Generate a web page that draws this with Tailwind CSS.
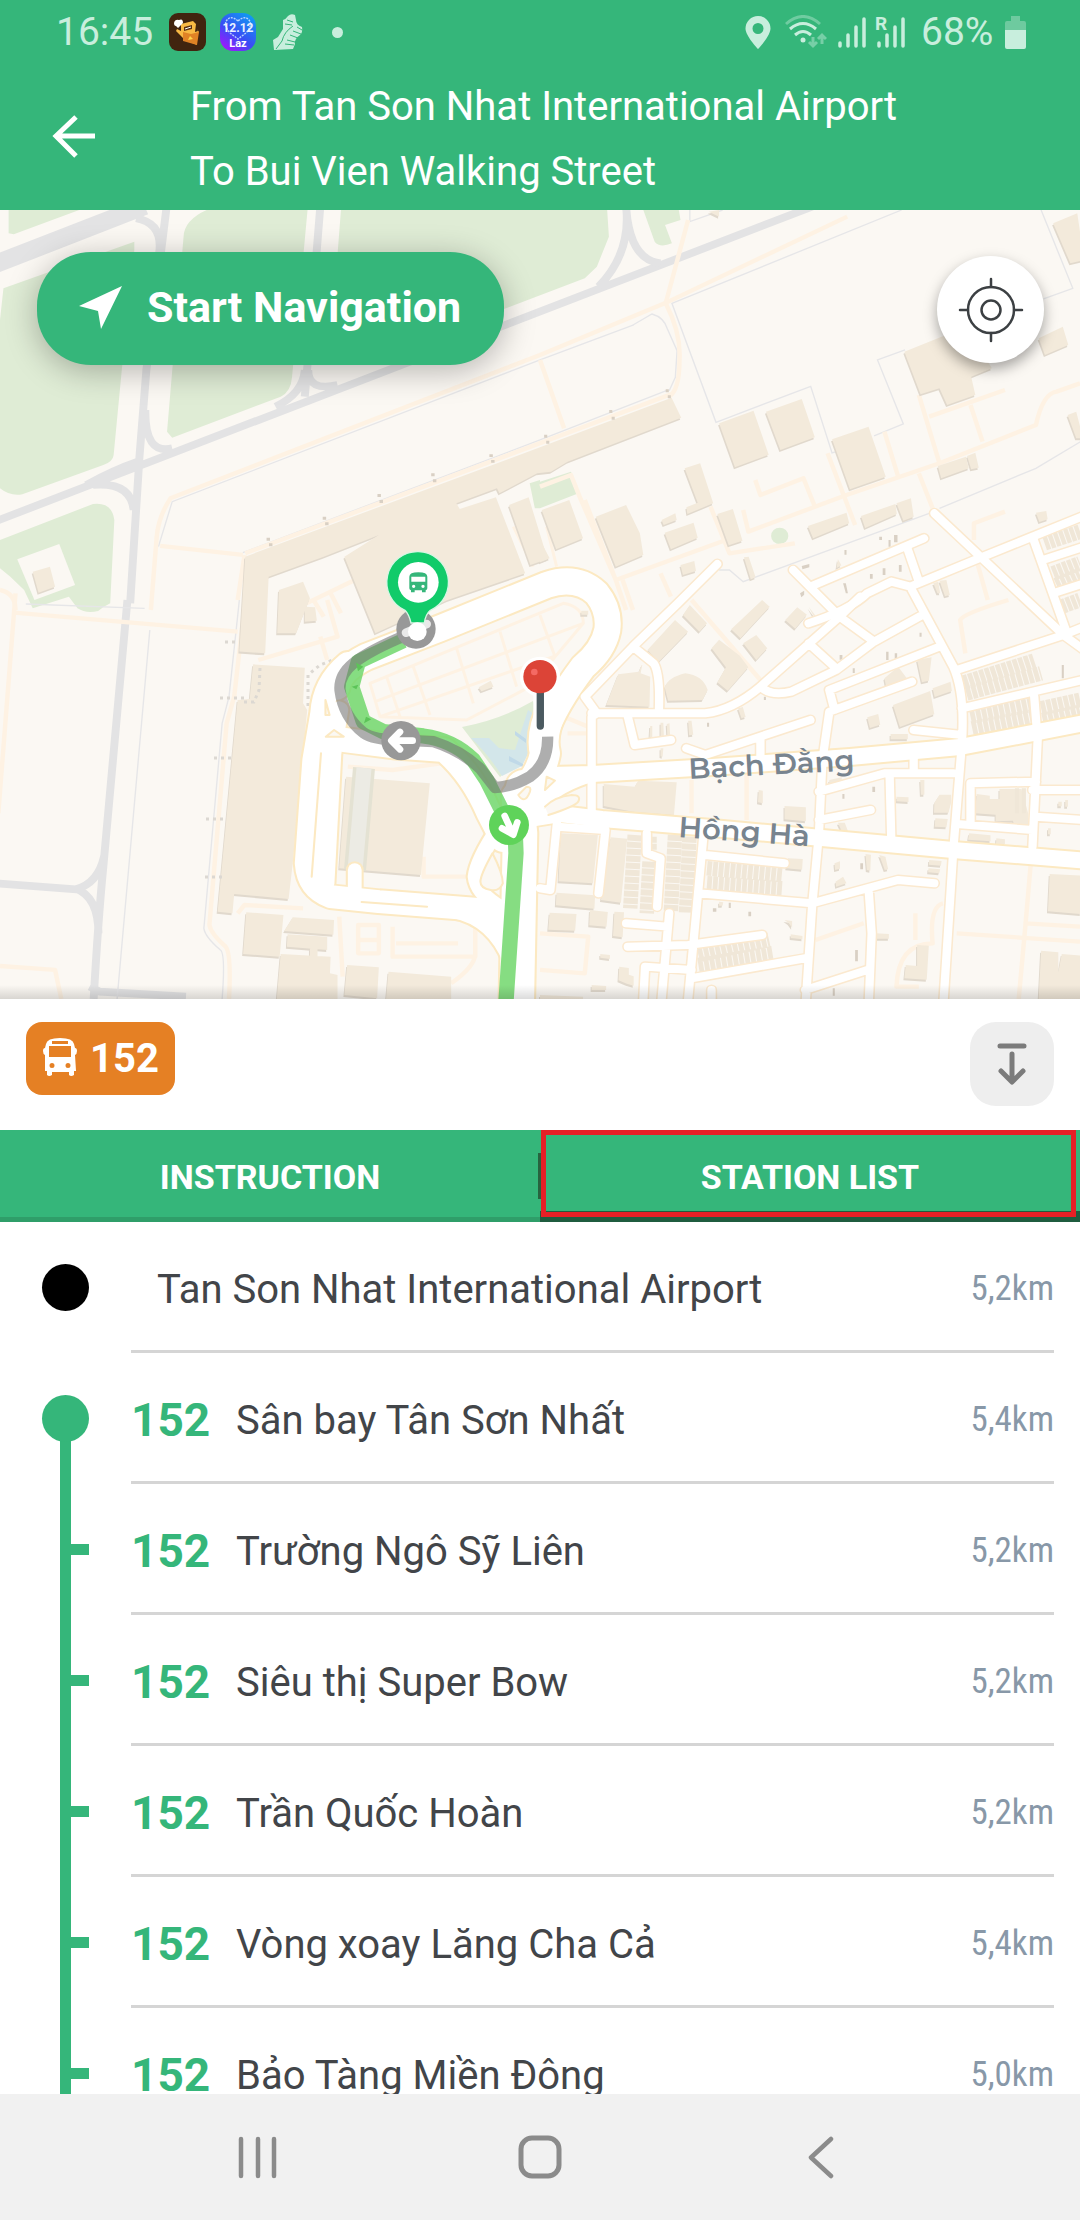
<!DOCTYPE html>
<html lang="vi">
<head>
<meta charset="utf-8">
<meta name="viewport" content="width=device-width, initial-scale=1">
<title>Route 152 – Station list</title>
<script src="https://cdn.jsdelivr.net/npm/@tailwindcss/browser@4"></script>
</head>
<body class="flex h-screen flex-col overflow-hidden bg-white font-[Roboto,sans-serif] text-[40px] text-[#424549]">

<header class="shrink-0 bg-[#35b67a] pb-[6px] text-white">
  <!-- status bar -->
  <div class="flex h-[74px] items-start justify-between pr-[54px] pl-[56px] pt-[8px] text-[#c8eedd]">
    <div class="flex h-[48px] items-center">
      <span class="w-[113px] text-[39px] leading-[48px]">16:45</span>
      <svg class="h-[38px] w-[37px]" viewBox="0 0 37 38" aria-hidden="true">
        <rect width="37" height="38" rx="9" fill="#41240f"/>
        <path d="M12 11l12-3 3 3-1 8 3-1-1-2 2 3-3 5 1 8-12-5-5-5-4-4 1-2 4 2z" fill="#f8b944"/>
        <path d="M14 19l8 2 8-2-2 13-14-4z" fill="#e08225"/>
        <path d="M5 10q1-4 5-3 4-2 4 3l-5 5-2-2q-2 0-2-3z" fill="#fff"/>
        <path d="M15 14l8-2v4l-8 2z" fill="#5b3110"/><path d="M16 16l6-2" stroke="#fff" stroke-width="1"/>
        <path d="M21 23l3 3-5 1z" fill="#ffd54a"/>
      </svg>
      <svg class="ml-[14px] h-[38px] w-[36px]" viewBox="0 0 36 38" aria-hidden="true">
        <defs><linearGradient id="lz" x1="0" y1="1" x2=".7" y2="0"><stop offset="0" stop-color="#b80bff"/><stop offset=".5" stop-color="#3a4cf5"/><stop offset="1" stop-color="#1296f2"/></linearGradient></defs>
        <rect width="36" height="38" rx="13" fill="url(#lz)"/>
        <path d="M18 8Q11 2 7 7t3 13l8 6 8-6q7-8 3-13T18 8z" fill="none" stroke="#b9d4ff" stroke-width="1.4" stroke-dasharray="2 1"/>
        <text x="18" y="19" text-anchor="middle" font-size="12" font-weight="700" fill="#e9f2ff">12.12</text>
        <text x="18" y="34" text-anchor="middle" font-size="11" font-weight="700" fill="#fff">Laz</text>
      </svg>
      <svg class="ml-[17px] h-[38px] w-[31px]" viewBox="0 0 31 38" fill="#c8eedd" aria-hidden="true">
        <path d="M10 7q3-1 5-4 3-3 7-1l1 5q0 5 6 7 1 5-2 8-6 4-5 9l-2 5-19 1-1-10 5-3 5-8z"/>
        <path d="M20 13q-9 6-11 15l-6 8M24 14l5 3M20 18l8 3M17 22l8 3M14 27l8 2M12 31l9 1M14 7l6 2M12 11l7 1" fill="none" stroke="#35b67a" stroke-width="1"/>
      </svg>
      <span class="ml-[28px] size-[11px] rounded-full bg-[#c8eedd]"></span>
    </div>
    <div class="flex h-[48px] items-center">
      <svg class="h-[33px] w-[26px]" viewBox="0 0 26 33" fill="#c8eedd" aria-hidden="true"><path fill-rule="evenodd" d="M13 0a12.5 12.5 0 0 1 12.5 12.5C25.500 20 13 33 13 33S.5 20 .5 12.500A12.500 12.500 0 0 1 13 0zm0 7a5.500 5.500 0 1 0 0 11 5.500 5.500 0 0 0 0-11z"/></svg>
      <svg class="ml-[14px] h-[34px] w-[42px]" viewBox="0 0 42 34" fill="none" stroke="#c8eedd" stroke-width="3" aria-hidden="true">
        <path d="M1 9Q18-6 35 9" opacity=".4"/><path d="M5 14q13-11 26 0M10 20q8-7 16 0"/><circle cx="18" cy="25" r="2.500" fill="#c8eedd" stroke="none"/>
        <path d="M28 22v9m-4-4l4 4 4-4M37 29v-9m-4 4l4-4 4 4" opacity=".45"/>
      </svg>
      <svg class="ml-[11px] h-[34px] w-[28px]" viewBox="0 0 28 34" stroke="#c8eedd" stroke-width="3.500" stroke-linecap="round" aria-hidden="true"><path d="M2 28v3M10 20v11M18 12v19M26 4v27"/></svg>
      <svg class="ml-[9px] h-[34px] w-[30px] overflow-visible" viewBox="0 0 30 34" stroke="#c8eedd" stroke-width="3.500" stroke-linecap="round" aria-hidden="true"><path d="M4 28v3M12 20v11M20 12v19M28 4v27"/><text x="0" y="15" font-size="19" font-weight="700" fill="#c8eedd" stroke="none">R</text></svg>
      <span class="ml-[16px] w-[84px] text-[39px] leading-[48px]">68%</span>
      <svg class="h-[33px] w-[21px]" viewBox="0 0 21 33" aria-hidden="true"><path d="M6 0h9v5h4q2 0 2 2v8H0V7q0-2 2-2h4z" fill="#6eca9f"/><path d="M0 14h21v17q0 2-2 2H2q-2 0-2-2z" fill="#c8eedd"/></svg>
    </div>
  </div>
  <div class="flex items-center pl-[50px]">
    <button type="button" aria-label="Back" class="w-[140px] shrink-0">
      <svg class="size-[48px]" viewBox="0 0 48 48" fill="none" stroke="#fff" stroke-width="5"><path d="M45 21H6M26 2L6 21l20 20"/></svg>
    </button>
    <h1 class="text-[40px] leading-[65px]">From Tan Son Nhat International Airport<br>To Bui Vien Walking Street</h1>
  </div>
</header>

<section class="relative h-[789px] shrink-0 overflow-hidden bg-[#fbf8f3]" aria-label="Map">
  <svg class="absolute inset-0 h-full w-full" viewBox="0 210 1080 789" preserveAspectRatio="xMidYMid slice">
    <defs>
      <g id="buildings">
        <g transform="translate(0 210) scale(.3444 .3333)">
          <path d="M712 1040L1568 712 1950 563 1978 623 1648 755 1600 785 1560 790 1450 850 1443 835 1325 880 1335 897 1440 862 1525 1090 1300 1170 1090 1270 1000 1040 1100 975 940 1040 780 1100 770 1330 695 1325zM1478 885l57-23 55 185-50 18zM810 1140l70-25 20 50-40 105h-55zM95 1085l50-15 15 60-48 18z"/>
        </g>
        <g transform="translate(540 210) scale(.3444 .3333)">
          <path d="M520 640l100-38 44 132-98 38zM656 605l104-38 38 115-100 38zM848 688l106-38 50 150-104 38zM1058 425l180-75 74 125-60 25 12 55-82 30-22-50-55 18zM1448 385l70-35 16 55-68 30zM420 775l45-15 38 120-75 32-3-20 33-14zM515 912l45-15 28 95-40 14zM362 968l84-30 12 45-78 35zM353 930l40-20 4 20-38 15zM162 920l88-35 40 85 10 65-80 35zM5 900l80-30 40 115-78 33zM0 990l28 55-28 12zM778 948l112-40 8 32-105 45zM932 918l100-36 4 30-92 42zM1035 880l42-15 8 55-30 12zM1155 768l82-28 8 35-80 30zM1240 738l24-10 10 45-22 5zM1490 40l70-30 20 140-40 10zM1532 615l25-10 20 80-20 0zM1440 908l30-5 4 25-24 8zM408 1065l40-12 5 30-38 12zM592 1042l14-2 20 62-14 6zM865 1048l10 18-14 8zM1142 1120l12 30h8l-6-35zM1160 1112l20-2 10 45-14 4zM490 5l30-5v20z"/>
        </g>
        <g transform="translate(0 600) scale(.3444 .3333)">
          <path d="M735 193L885 203 880 310 892 330 850 790 838 897 680 882 675 940 632 935 690 300 725 297zM715 937l108 8-11 125-106-8zM850 952l120 8-2 44-143-11zM835 1003l115 7v40l-117-10zM815 1062l145 8-2 50 22 5v80H803zM1008 1095l92 7-5 93-95-10zM1128 1115l182 15v80h-190zM1005 530l243 20-26 275-237-20zM885 20l30 2 5 40-35 3zM1390 262l35-20 8 18-35 14zM900 1040h22v30h-22z"/>
        </g>
        <g transform="translate(540 600) scale(.3444 .3333)">
          <path d="M192 315l35-92 60-8 8-20 2 0-5 25 28 10-2 90zM362 262q10-30 60-42 50 5 65 50l-15 30-100 2zM312 150l80-90 38 35-85 90zM415 45l20-30 50 55-22 25zM498 145l22-26 60 48 25 35-60 70-30-25 25-45zM555 88L645 0l22 20-85 95zM590 130l38-25 32 40-32 35zM712 60l35-38 28 22-34 42zM1025 315l108-42 12 70-100 38zM950 352l32-10 6 32-30 10zM1000 235l40-35 25 35-60 25zM1095 180l42-8-8 70-20 5zM1140 265l52-20 4 28-50 18zM1018 402h50v16h-50zM185 552l90 8 10-18 112 5-8 98-120-10-84-17zM60 700l108 5-14 145-100-6zM205 712l48 4-18 192-58-8zM48 878l112 8-2 40-112-10zM28 938l78 4-4 50-78-3zM145 930l52 6-4 44-50-4zM216 935l28 2-4 75-28-4zM710 618l62 4v42l-62-6zM1268 582l38 5 0 10 28 0v-30l64 0 20 75v35l-40 0-5-15-50 2v-20l-60-4zM1145 608l15-24h34v22l-8 32h-42zM1148 655l36 2-4 25-34-2zM1480 822l90 5v115l-95-8zM1455 1052l50 5v60l10-55 60 5v130h-127zM1095 1035l34 2-6 102-65-4 4-40 33 3zM1246 700l62 6v18l-65-5zM1325 715l25 3v14h-26zM720 775l43 2-2 32-46-4zM1130 780l36 3-2 14-35-3zM1128 805l34 3-3 12-32-3zM855 790l16-6v22l-14 4zM945 762l16 2-2 48-10-2zM985 765l18 5 8 38-10 2zM858 845l22-15 10 20-30 10zM230 1100l28 4v20l14 5v28l-20-6-24-10zM175 1062l28 3v12l-28-4zM150 1155l42 3v12h-42zM728 1003l34 5v10l-34-4zM975 1000l38 2v14h-38zM865 668l20 0 20 55-15 2zM635 570l12 2v38l-14-3zM575 325l14-4 8 30-12 4zM430 362l10 0 5 42-12 2zM320 378l6 0 0 34-8 0zM350 368h8l2 45-10 2zM368 372l8-2 2 40-8 0zM350 445h8l-2 25-6-2zM1035 590l35 2v14l-35-2zM840 540l36-8v14l-36 8zM1104 540h12v44h-10zM0 1185l125 5v20H0zM710 960l22 3v20l-10-14zM520 905l12 2-2 10h-10zM1505 605h10v14h-10zM1525 600h8v20h-8zM1475 685h8v18h-8zM120 32h20v12h-20zM780 20l28 38-6 4z"/>
        </g>
      </g>
      <g id="minor-roads">
        <g transform="translate(540 210) scale(.3444 .3333)">
          <path d="M785 1130l330-145M1065 1010l35 105M780 1240q120-40 170-90l70-35 55 15 200-85 310-130M1145 910l375 365 80 60M1430 980l100 290M1460 1050l120-40M1490 1150l90-30"/>
        </g>
        <g transform="translate(540 600) scale(.3444 .3333)">
          <path d="M150 660V350l15-10-35-50L270 140 400 10 515-108M150 340h330q80-10 160-80L870 50l60-60M870 50L735-90M270 140l60 50q20 30 15 150M640 260q30 30 90 15l130-65 110-85 140-80M780 130l80 75M870 50l100 75M1080-30l120 230q35 80 25 230M1210 210l310-105 60-25M1225 325l350-85M1435 290l10 130-15 320M1160 140L840 270l15 60M1080 245L840 335l-20 145-10 220-20 220-18 280M785 360L480 465 425 445M640 410v70M255 350l20 85 105-15M1225 430l-25 320-28 450M1085 390l140 15M1085 470v50M810 575l190-55h200M1015 520l5 200M810 660l150-30M1440 545l-190 5v120M1210 672l220 18M1430 570h150M1440 650l140 10M50 680l140 10-20 190M50 660L30 870 0 865M310 700v60l40 15-10 145M475 700l-45 500M480 765l230 25M460 880l330 30 250-70 105 10M955 880l8 120-8 200M250 970l120 10M375 940l-22 260M255 1040l175-5 215-30M440 1135l330-60M300 1200l5-100 135 10M770 1170l180-60M498 1170v40"/>
        </g>
      </g>
      <g id="avenues">
        <path d="M550 775L592 774 712 767 850 757 960 747 1090 722"/>
        <path d="M535 818L560 814 602 819 712 828 822 838 953 850 1090 861"/>
        <path d="M535 806Q560 782 592 774"/>
      </g>
      <linearGradient id="edge" x1="0" y1="0" x2="0" y2="1"><stop offset="0" stop-color="#000" stop-opacity="0"/><stop offset="1" stop-color="#000" stop-opacity=".14"/></linearGradient>
    </defs>

    <!-- parks and grass -->
    <g fill="#dfecd5">
      <g transform="translate(0 210) scale(.3444 .3333)">
        <path d="M25 0H230L40 73 25 70zM600 0H893L848 500Q845 545 815 560L500 683 485 665 533 80Q535 30 600 0zM990 0H1763L1768 80 1733 170 1698 205 1200 400H960zM390 95L10 235 0 330V835Q30 860 65 853L300 765Q328 755 330 735L355 465 390 120zM0 990L270 882Q325 875 332 930L320 1180Q300 1190 285 1203 250 1212 225 1195L200 1160 95 1195 70 1140 30 1100 0 1075z"/>
        <path d="M50 1048l122-46 46 123-118 45z" fill="#fbf8f3"/>
      </g>
      <g transform="translate(540 210) scale(.3444 .3333)">
        <path d="M300 0h103l5 30-45 15 20 55q-35 15-50-5zM0 815l90-30 22 65-112 45zM0 810l-30 10 15 75 15 0z"/><circle cx="696" cy="978" r="25"/>
      </g>
      <path d="M462 727Q500 720 533 701L540 720 530 750 500 777z"/>
    </g>
    <path d="M471 738l18 0 10 10 16 2 13-40 6 4-4 36-8 16-20 10q-14-22-31-38z" fill="#d3e6ea"/>
    <path d="M515 731l11 8v4l-11-8zM509 756l14 8v3l-14-6z" fill="#c0d9e8"/>

    <!-- taxiways -->
    <g fill="none" stroke="#e3e3e4" stroke-width="23">
      <g transform="translate(0 210) scale(.3444 .3333)">
        <path d="M-20 165L420-12" stroke-width="54"/>
        <path d="M485-20L425 480 405 740 378 1180M930-10L890 500 885 560M-10 933L2358-10M400 755Q330 780 250 825M270 825Q380 815 388 900M422 600Q420 735 500 715M395 25Q475 40 462 130M885 480Q880 550 800 590M895 480Q895 545 980 525"/>
      </g>
      <g transform="translate(540 210) scale(.3444 .3333)"><path d="M250-10Q265 130 170 230M250-10Q260 150 350 160"/></g>
      <g transform="translate(0 600) scale(.3444 .3333)"><path d="M370 0L300 800Q285 960 272 1197M-10 850L220 868Q285 850 302 770M220 866Q285 890 286 1000M260 1160L290 1175 540 1190"/></g>
    </g>

    <!-- fences and thin tracks -->
    <g fill="none" stroke="#e6e6e8" stroke-width="4">
      <g transform="translate(0 210) scale(.3444 .3333)"><path d="M460 1010L500 875 1568 450 1840 345M705 1028L1568 690 1935 542"/></g>
      <g transform="translate(540 210) scale(.3444 .3333)"><path d="M270 345l55-33q35 10 45 45l28 65-5 80-18 40M1050 0L383 280l128 357 275-108 62 200 25-8M1060 420l-80 30 75 192-85 36M1455 0l92 235-85 32M1160 895l280-120 130-80M1130 910L590 1115l-40-35h-30M435 0v35L530 0"/></g>
      <g transform="translate(0 600) scale(.3444 .3333)"><path d="M435 90L340 1197M695 0L665 290 645 370 592 985Q595 1010 640 1050 655 1060 645 1197M75 12L420 25"/></g>
    </g>
    <g fill="none" stroke="#fef2e3" stroke-width="13" stroke-linejoin="round">
      <g transform="translate(0 210) scale(.3444 .3333)"><path d="M438 1200L455 980Q460 920 495 865L1568 435 1930 280 2460 20M465 1008L705 1035M0 1140Q45 1150 45 1200M712 1030L1950 552M710 1035L690 1170" /><path d="M870 1190L1030 1110Q1080 1100 1085 1150L1110 1220M910 1170l30 50M960 1150l30 60"/></g>
      <g transform="translate(540 210) scale(.3444 .3333)"><path d="M430 30L365 280Q410 370 405 450 405 540 375 560M0 450L70 655M0 830L90 795 115 860 220 1110 540 990M1100 555L1160 760 890 855 605 965 590 900M835 730L915 945M1000 665L1040 800M1130 620L1350 540M1250 585L1285 695M1160 760L1440 645Q1460 550 1500 545L1568 520M1100 790L1140 895M625 810L640 855 765 805 800 895M495 890L550 1030 740 1000M220 1110L250 1200M350 1090L380 1160M1260 990V940L1350 905M1270 1060L1300 1170M240 1110L270 1200M130 870L220 1110"/></g>
      <g transform="translate(0 600) scale(.3444 .3333)"><path d="M45-20L-5 640M40 38L690 95M0 1098L160 1110 178 1197M712 0L680 290 658 370 608 975Q612 1000 655 1040 672 1060 665 1197M690 940L710 915 880 925M985 950L995 1130M1040 975H1100V1060H1040zM1040 1020h60M1140 980V1070H1380V985M1150 1030H1330M1010 500L1140 510 1280 490M1230 770V830H1370M750 180L980 110 950 0M930 110L950 180M1310 1150Q1380 1100 1380 1060"/></g>
      <g transform="translate(540 600) scale(.3444 .3333)"><path d="M440 540V640M600 520V660M440 0L640 240M1425 790L1410 970 1390 1197M1210 1000L1568 1025M1410 970L1568 980M1170 910Q1130 920 1140 1030 1040 1030 1035 1160H1100M1090 940V1020M800 1020L940 970M0 1000L140 1010 130 1120 0 1110M1235 160L1220 60Q1230 40 1360 0M70 350L140 380M80 400H140"/></g>
      <g transform="translate(300 520) scale(.3333)" stroke-width="9"><path d="M210 490L790 250Q850 260 850 310L690 500 500 600 240 590zM225 545L850 310M240 590L760 410M260 470L300 590M340 440L390 585M470 385L520 550M600 335L650 500M720 285L765 410M640 20L700 140M740 20L770 140"/></g>
    </g>

    <use href="#buildings" x="-1" y="2" fill="#e1d9cd"/>
    <use href="#buildings" fill="#f3eadb"/>
    <path d="M355 870L364 768" stroke="#e4e2d3" stroke-width="22" fill="none"/>
    <path d="M355 870L364 768" stroke="#ecebe4" stroke-width="15" fill="none"/>

    <!-- terraced houses -->
    <g fill="none" stroke="#f0e7d8">
      <g transform="translate(540 600) scale(.3444 .3333)">
        <g stroke-width="44" stroke-dasharray="14 3"><path d="M1230 248L1435 182M1238 280L1455 220M1455 325L1568 300M1460 360L1568 335M1250 350L1425 315M1255 385L1425 350M485 805L705 825M485 850L705 865M460 1065L665 1020M460 1095L675 1060"/></g>
        <g stroke-width="42" stroke-dasharray="18 3"><path d="M275 705L262 925M318 710V760M318 785L310 940M392 705L380 935M434 710L424 938"/></g>
        <path d="M1385 565V640M1405 565V640" stroke-width="12"/>
      </g>
      <g transform="translate(540 210) scale(.3444 .3333)" stroke-width="44" stroke-dasharray="13 3"><path d="M1465 1000L1568 965M1490 1090L1568 1060M1500 1125L1568 1095M1515 1190L1568 1170"/></g>
    </g>
    <g fill="#d9d0c4"><g transform="translate(540 600) scale(.3444 .3333)"><path d="M485 368h6v12h-6zM650 290h6v10h-6zM908 205h6v14h-6zM1005 155h7v25h-7zM1030 160h7v18h-7zM870 165h8v14h-8zM1102 98h6v12h-6zM605 935l8 0v14h-8zM502 925h10v10h-10zM548 908h6v16h-6zM915 1050h8v34h-8zM850 1165h6v22h-6zM930 790h8v18h-8zM965 560h8v16h-8zM878 582h6v14h-6zM1515 195h6v40h-6z"/></g>
    <g transform="translate(540 210) scale(.3444 .3333)"><path d="M985 980h8v10h-8zM1012 990h6v20h-6zM1028 975h10v22h-10zM995 1075h8v20h-8zM1042 1065h8v20h-8zM958 1092h8v14h-8zM884 1020h6v14h-6zM880 1120l8 0 6 30h-6zM755 1150l12-8v12l-8 8zM760 1068l22-6v10l-20 6z"/><path d="M365 538h9v9h-9zM371 556h9v9h-9zM201 600h9v9h-9zM208 620h9v9h-9zM12 674h9v9h-9zM18 692h9v9h-9z"/></g>
    <g transform="translate(0 210) scale(.3444 .3333)"><path d="M1421 733h10v8h-10zM1426 750h10v8h-10zM1252 790h10v9h-10zM1257 808h10v9h-10zM1096 852h10v9h-10zM1102 870h10v9h-10zM937 920h10v9h-10zM944 937h10v9h-10zM774 983h10v9h-10zM781 1000h10v9h-10z"/></g></g>
    <g fill="none" stroke="#dcd8d2" stroke-width="3" stroke-dasharray="3 4"><path d="M225 642h14M220 698h26M214 758h18M206 819h20M205 877h17M260 668l-1 22-5 12h-14M308 706V675l12-10 18-7"/></g>

    <!-- streets: casing, then surface -->
    <g fill="none" stroke-linecap="round" stroke-linejoin="round">
      <use href="#minor-roads" stroke="#fbe9cf" stroke-width="33"/>
      <g stroke="#fce9c2">
        <use href="#avenues" stroke-width="20"/>
        <g transform="translate(300 520) scale(.3333)"><path d="M110 500Q120 450 200 410L420 325 740 195Q830 165 890 220 930 270 922 330 910 390 850 440 760 560 735 640" stroke-width="90"/><path d="M760 560Q720 640 735 700 720 780 650 830L660 1000" stroke-width="102"/></g>
        <g transform="translate(0 600) scale(.3444 .3333)">
          <path d="M1010 190Q940 250 935 340L912 480 890 790Q895 865 960 890L1100 905 1470 935" stroke-width="80"/><path d="M985 330L965 460 945 850" stroke-width="64"/><path d="M1030 810v90" stroke-width="52"/>
          <path d="M1000 420L1150 440 1290 450Q1370 520 1420 640L1460 720" stroke-width="84"/><path d="M1450 680Q1385 780 1380 830 1385 880 1450 920" stroke-width="56"/><path d="M1320 925Q1440 950 1490 1080" stroke-width="72"/><path d="M1520 560Q1500 620 1510 700L1500 1240" stroke-width="112"/>
        </g>
      </g>
      <g stroke="#fff">
        <use href="#minor-roads" stroke-width="24"/>
        <use href="#avenues" stroke-width="16"/>
        <g transform="translate(300 520) scale(.3333)"><path d="M110 500Q120 450 200 410L420 325 740 195Q830 165 890 220 930 270 922 330 910 390 850 440 760 560 735 640" stroke-width="78"/><path d="M760 560Q720 640 735 700 720 780 650 830L660 1000" stroke-width="90"/></g>
        <g transform="translate(0 600) scale(.3444 .3333)">
          <path d="M1010 190Q940 250 935 340L912 480 890 790Q895 865 960 890L1100 905 1470 935" stroke-width="68"/><path d="M985 330L965 460 945 850" stroke-width="52"/><path d="M1030 810v90" stroke-width="40"/>
          <path d="M1000 420L1150 440 1290 450Q1370 520 1420 640L1460 720" stroke-width="72"/><path d="M1450 680Q1385 780 1380 830 1385 880 1450 920" stroke-width="44"/><path d="M1320 925Q1440 950 1490 1080" stroke-width="60"/><path d="M1520 560Q1500 620 1510 700L1500 1240" stroke-width="100"/>
        </g>
      </g>
      <g stroke="#fce9c2" stroke-width="6">
        <g transform="translate(0 600) scale(.3444 .3333)"><path d="M932 460L905 830M945 300l12 45-12 0zM970 390l28 20h-52zM1430 760q30 60 30 90-10 25-35 20-30-5-30-25 0-20 35-85zM1050 906L1240 920" fill="#fbf8f3"/></g>
        <g transform="translate(300 520) scale(.3333)"><path d="M740 770l25 12-30 28zM735 860q30-30 80-35 30 0 20 20-10 15-90 40M655 825q20 30 35-10 5-15-10-15z" fill="#fbf8f3"/></g>
      </g>
    </g>

    <g fill="#78848f" font-family="Montserrat, Inter, sans-serif" font-size="29" font-weight="600">
      <text transform="translate(689 779) rotate(-3)">Bạch Đằng</text>
      <text transform="translate(678 837) rotate(4)">Hồng Hà</text>
    </g>

    <!-- route and markers -->
    <g transform="translate(300 520) scale(.3333)" fill="none">
      <path d="M310 362L175 425 155 500 190 605 250 635 370 648Q460 660 520 720L560 780 605 870 645 920 648 1000 618 1445" stroke="#6fd66a" stroke-opacity=".84" stroke-width="46" stroke-linejoin="round"/>
      <path d="M320 345Q210 390 160 430 117 465 120 510 130 590 190 638 220 660 300 660L400 665Q480 690 540 745L585 803Q640 800 690 770 745 730 743 650" stroke="#6f6f6f" stroke-opacity=".56" stroke-width="34" stroke-linejoin="round"/>
      <path d="M168 428l22 12-16 14zM155 500l20-6-6 14zM198 590l16 8-22 12z" fill="#5cc458"/>
      <circle cx="348" cy="327" r="59" fill="#989898"/>
      <path d="M318 338L380 312" stroke="#e9e9e9" stroke-width="26" stroke-linecap="round"/>
      <circle cx="303" cy="662" r="59" fill="#989898"/>
      <path d="M338 662H276M300 636L274 662 300 688" stroke="#fff" stroke-width="20" stroke-linecap="round" stroke-linejoin="round"/>
      <circle cx="627" cy="915" r="60" fill="#5fd35a"/>
      <path d="M614 888L638 940M606 925L640 944 652 907" stroke="#fff" stroke-width="20" stroke-linecap="round" stroke-linejoin="round"/>
      <path d="M355 95a92 92 0 0 1 36 176q-14 12-18 38h-40q-6-26-18-38A92 92 0 0 1 355 95z" fill="#11cb6a" stroke="#d8f5e4" stroke-width="4"/>
      <circle cx="352" cy="335" r="28" fill="#fff"/>
      <circle cx="355" cy="187" r="61" fill="#fff"/>
      <path fill-rule="evenodd" d="M328 170q0-13 27-13t27 13v35q0 4-5 6v6h-11v-6h-22v6h-11v-6q-5-2-5-6zm6 0v15h42v-15zm7 24a5 5 0 1 0 0 10 5 5 0 0 0 0-10zm28 0a5 5 0 1 0 0 10 5 5 0 0 0 0-10z" fill="#35b67a"/>
      <path d="M721 520V620" stroke="#fff" stroke-width="42" stroke-linecap="round"/>
      <circle cx="720" cy="470" r="60" fill="#fff"/>
      <path d="M721 510V618" stroke="#4b5a60" stroke-width="22" stroke-linecap="round"/>
      <circle cx="720" cy="470" r="50" fill="#dc4437"/><circle cx="703" cy="456" r="10" fill="#f46a64"/>
    </g>
    <rect y="985" width="1080" height="14" fill="url(#edge)"/>
  </svg>
  <div class="relative flex items-start justify-between pt-[42px] pr-[36px] pl-[37px]">
    <button type="button" class="flex h-[113px] w-[467px] items-center rounded-[54px] bg-[#35b67a] pb-[2px] pl-[42px] text-[43px] font-bold text-white shadow-[0_6px_32px_rgba(0,0,0,0.28)]">
      <svg class="mr-[25px] size-[43px] shrink-0" viewBox="0 0 43 43" fill="#fff" aria-hidden="true"><path d="M43 0L22 43 19 25 0 20z"/></svg>Start Navigation
    </button>
    <button type="button" aria-label="My location" class="mt-[4px] flex size-[107px] items-center justify-center rounded-full bg-white shadow-[0_6px_14px_rgba(0,0,0,0.35)]">
      <svg class="size-[66px]" viewBox="0 0 66 66" fill="none" stroke="#3c4043" stroke-width="2.500" stroke-linecap="round"><circle cx="33" cy="33" r="23"/><circle cx="33" cy="33" r="9.500"/><path d="M33 2v8M33 56v8M2 33h8M56 33h8"/></svg>
    </button>
  </div>
</section>

<section class="flex h-[131px] shrink-0 items-start justify-between px-[26px] pt-[23px]">
  <span class="flex h-[73px] items-center rounded-[16px] bg-[#e58024] pr-[16px] pl-[17px] text-[40px] font-bold text-white">
    <svg class="mr-[13px] mb-[3px] h-[38px] w-[34px]" viewBox="0 0 34 38" fill="#fff" aria-hidden="true"><path fill-rule="evenodd" d="M3 6Q4 0 17 0t14 6l1 4q2 0 2 3t-2 4l1 16h-2v4q-3 2-5 0v-3H9v3q-3 2-5 0v-4H2L2 17Q0 16 0 13t2-3zM9 3v3h16V3zM6 8v11h22V8zm3 17a2.500 2.500 0 1 0 0 5 2.500 2.500 0 0 0 0-5zm16 0a2.500 2.500 0 1 0 0 5 2.500 2.500 0 0 0 0-5z"/></svg>152
  </span>
  <button type="button" aria-label="Collapse" class="flex size-[84px] items-center justify-center rounded-[26px] bg-[#eeeeee]">
    <svg class="h-[43px] w-[30px]" viewBox="0 0 30 43" fill="none" stroke="#7b7b7b" stroke-width="5" stroke-linecap="round" stroke-linejoin="round"><path d="M3 3h24M15 11v26M4 28l11 11 11-11"/></svg>
  </button>
</section>

<div role="tablist" class="relative grid h-[92px] shrink-0 grid-cols-2 bg-[#35b67a] font-bold text-white">
  <button type="button" role="tab" aria-selected="false" class="border-b-[5px] border-[#2f9e69] pt-[6px] text-[34px] leading-[40px]">INSTRUCTION</button>
  <button type="button" role="tab" aria-selected="true" class="border-b-[11px] border-[#1f5c3f] pt-[12px] text-[34px] leading-[40px]">STATION LIST</button>
  <span class="absolute top-[23px] left-1/2 -ml-[2px] h-[46px] w-[3px] bg-[#27633f]"></span>
  <span class="absolute top-0 right-[4px] bottom-[5px] left-1/2 ml-[1px] border-[5px] border-[#e62026]"></span>
</div>

<main class="min-h-0 flex-1 overflow-hidden">
  <ul id="stations"></ul>
</main>

<nav class="grid h-[126px] shrink-0 grid-cols-3 place-items-center bg-[#f1f1f1] px-[117px]">
  <button type="button" aria-label="Recent apps"><svg class="size-[44px]" viewBox="0 0 44 44" stroke="#8b8b8b" stroke-width="4.500" stroke-linecap="round"><path d="M5 4v37M22 4v37M38 4v37"/></svg></button>
  <button type="button" aria-label="Home"><svg class="size-[44px]" viewBox="0 0 44 44" fill="none" stroke="#8b8b8b" stroke-width="5"><rect x="3" y="3" width="38" height="38" rx="11"/></svg></button>
  <button type="button" aria-label="Back"><svg class="size-[44px]" viewBox="0 0 44 44" fill="none" stroke="#8b8b8b" stroke-width="4.500" stroke-linecap="round" stroke-linejoin="round"><path d="M31 4L11 22.500 31 41"/></svg></button>
</nav>

<script>
const stations = [
  ['', 'Tan Son Nhat International Airport', '5,2km'],
  ['152', 'Sân bay Tân Sơn Nhất', '5,4km'],
  ['152', 'Trường Ngô Sỹ Liên', '5,2km'],
  ['152', 'Siêu thị Super Bow', '5,2km'],
  ['152', 'Trần Quốc Hoàn', '5,2km'],
  ['152', 'Vòng xoay Lăng Cha Cả', '5,4km'],
  ['152', 'Bảo Tàng Miền Đông', '5,0km']
];
const line = top => `<span class="absolute left-[30px] ${top} bottom-0 w-[11px] bg-[#35b67a]"></span>`;
document.getElementById('stations').innerHTML = stations.map(([route, name, km], i) => {
  const rail = i === 0
    ? '<span class="absolute left-[12px] top-[42px] size-[47px] rounded-full bg-black"></span>'
    : i === 1
      ? line('top-[66px]') + '<span class="absolute left-[12px] top-[42px] size-[47px] rounded-full bg-[#35b67a]"></span>'
      : line('top-0') + '<span class="absolute left-[30px] top-[60px] h-[11px] w-[29px] bg-[#35b67a]"></span>';
  const label = route
    ? `<span class="w-[105px] shrink-0 text-[46px] font-bold text-[#35b67a]">${route}</span><span class="flex-1">${name}</span>`
    : `<span class="flex-1 pl-[26px]">${name}</span>`;
  return `<li class="flex h-[131px] pr-[26px] pl-[30px]">
    <span class="relative w-[101px] shrink-0">${rail}</span>
    <div class="flex flex-1 items-center border-b-[3px] border-[#d5d5d5] pt-[7px] whitespace-nowrap">${label}<span class="font-['Roboto_Condensed',Roboto,sans-serif] text-[35px] text-[#8898a8]">${km}</span></div>
  </li>`;
}).join('');
</script>
</body>
</html>
